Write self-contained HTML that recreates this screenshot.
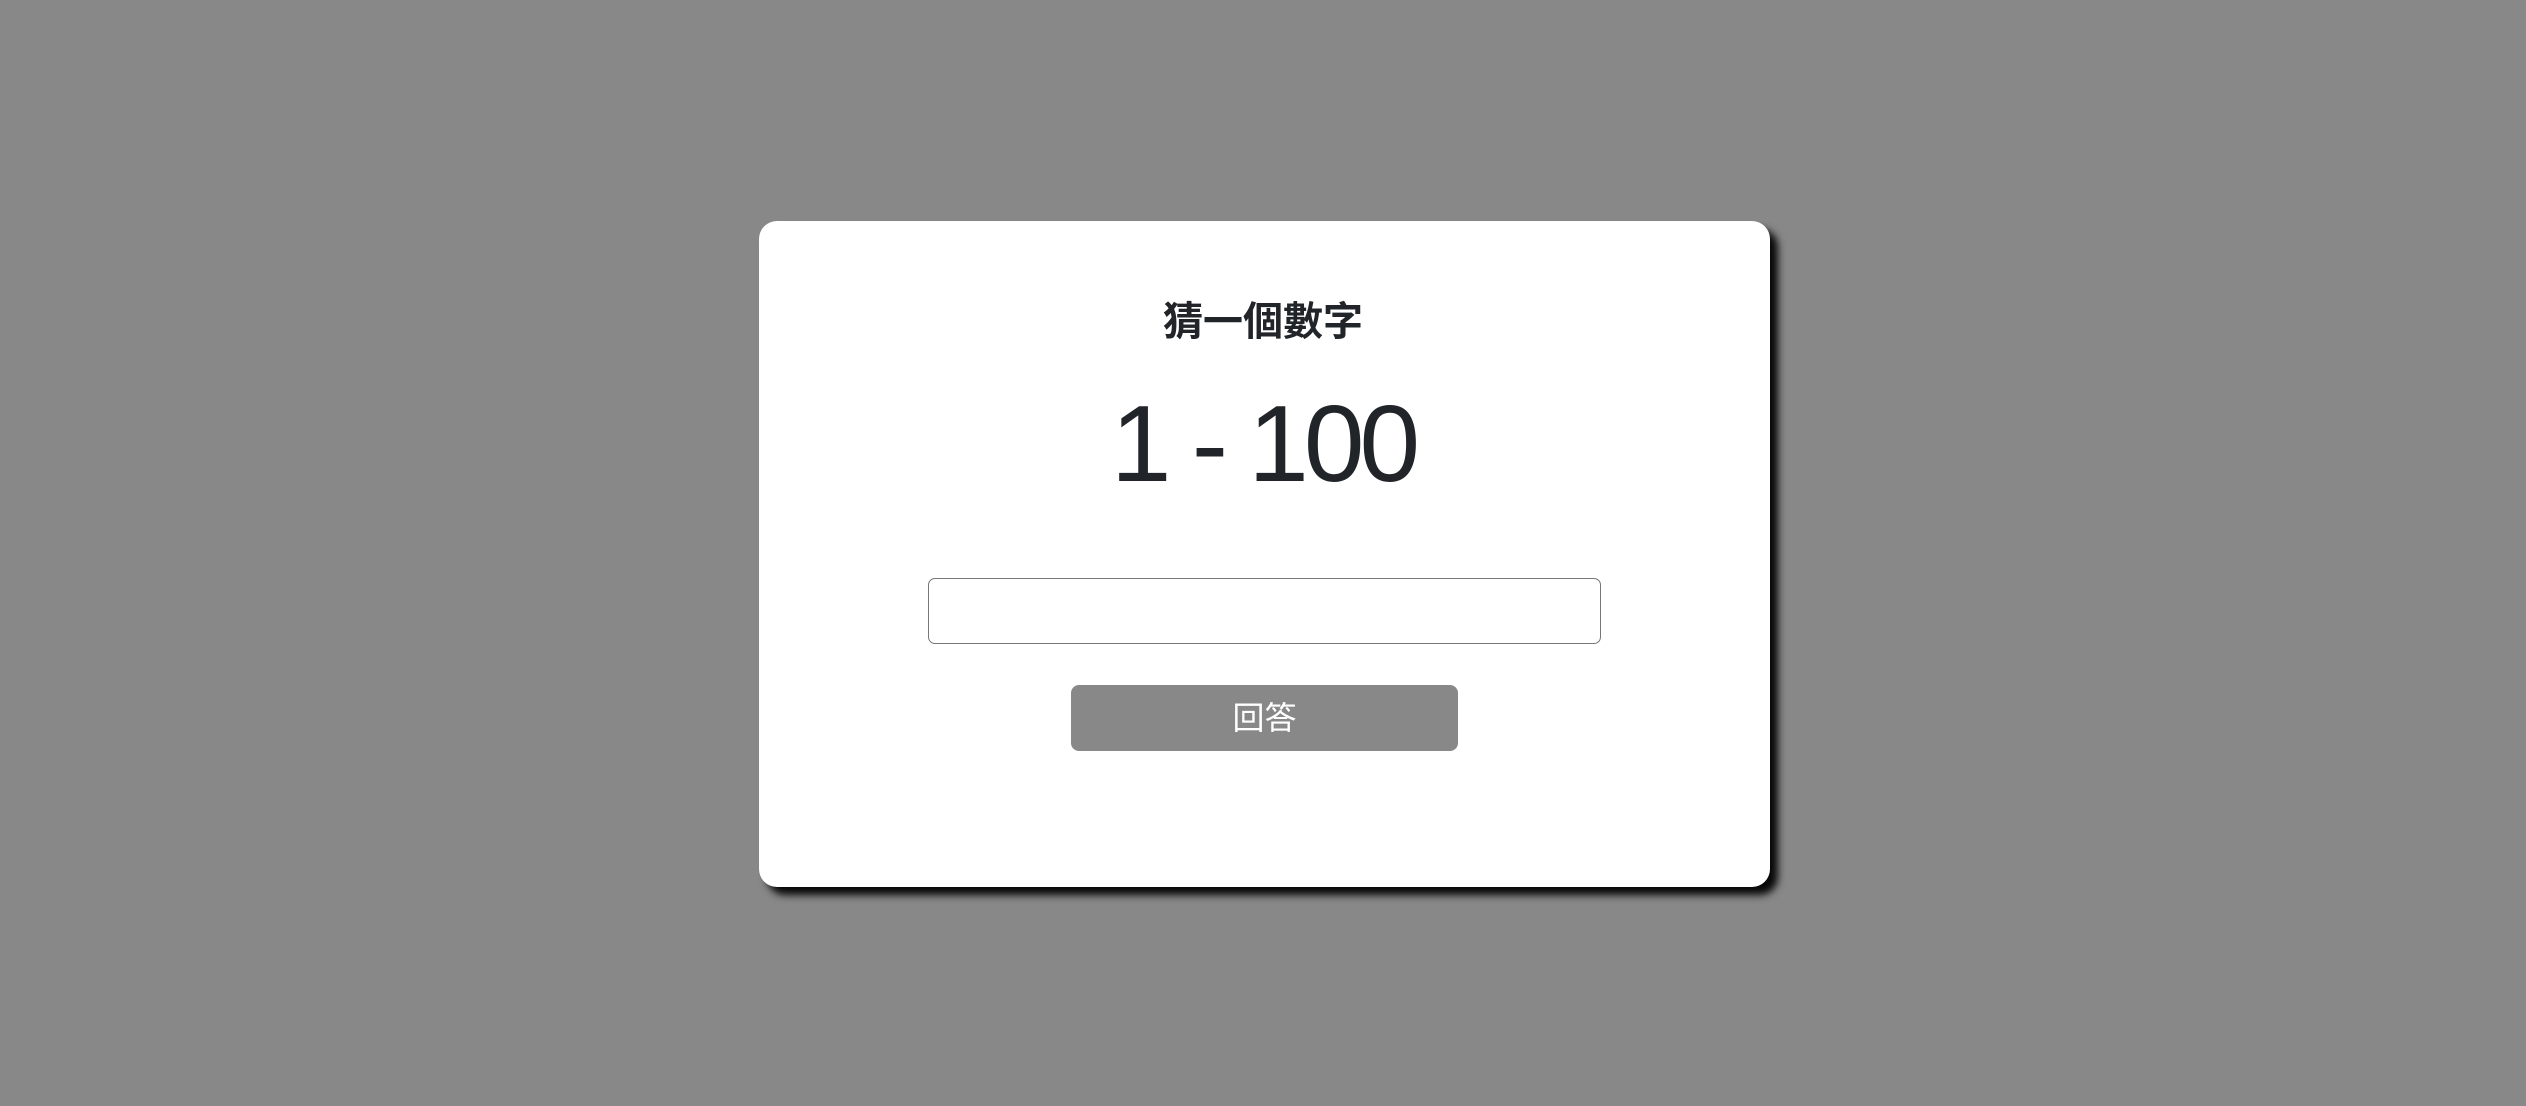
<!DOCTYPE html>
<html><head><meta charset="utf-8"><style>
html,body{margin:0;padding:0;width:2526px;height:1106px;background:#888;overflow:hidden;font-family:"Liberation Sans","Noto Sans CJK TC",sans-serif;}
.card{position:absolute;left:759px;top:221px;width:1011px;height:666px;background:#fff;border-radius:18px;box-shadow:8px 8px 8px rgba(0,0,0,0.95);}
.title{position:absolute;left:0;right:0;top:296px;text-align:center;font-size:40px;font-weight:bold;color:#212529;line-height:52px;}
.range{position:absolute;left:0;right:0;top:379px;text-align:center;font-size:109px;color:#212529;line-height:130px;letter-spacing:-5px;}
.inp{position:absolute;left:928px;top:578px;width:671px;height:64px;border:1.5px solid #777;border-radius:7px;background:#fff;}
.btn{position:absolute;left:1071px;top:685px;width:387px;height:66px;background:#888;border-radius:8px;color:#fff;font-size:32px;line-height:66px;text-align:center;}
</style></head><body>
<div class="card"></div>
<div class="title">猜一個數字</div>
<div class="range">1 - 100</div>
<div class="inp"></div>
<div class="btn">回答</div>
</body></html>
